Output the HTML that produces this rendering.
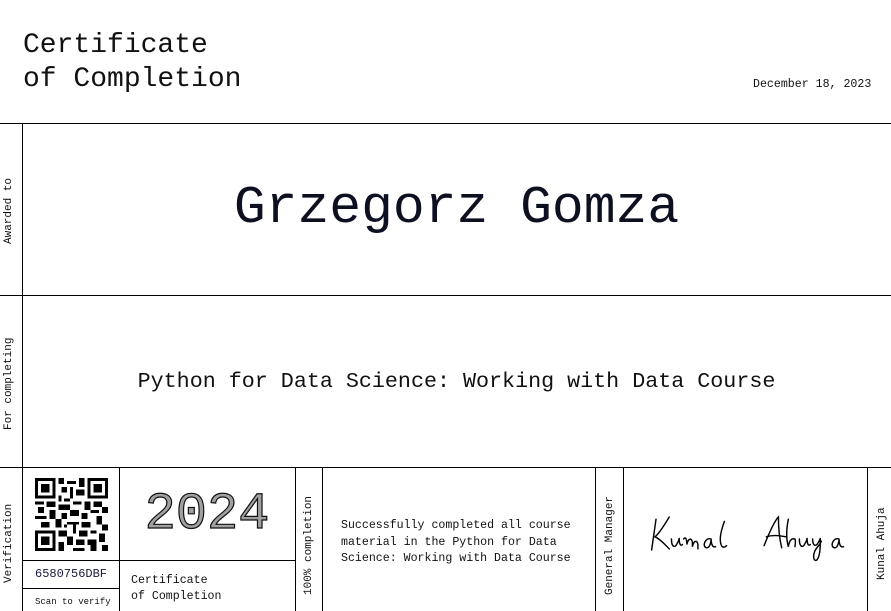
<!DOCTYPE html>
<html><head><meta charset="utf-8"><style>
body{margin:0;width:891px;height:611px;background:#fff;position:relative;overflow:hidden;font-family:"Liberation Mono",monospace;color:#111}
.a{position:absolute}
.h{position:absolute;height:1px;background:#000}
.v{position:absolute;width:1px;background:#000}
.rot{position:absolute;transform:rotate(-90deg);transform-origin:left top;white-space:nowrap;font-size:11px}
</style></head><body>
<div class="a" style="left:23px;top:29px;font-size:28px;line-height:34px">Certificate<br>of Completion</div>
<div class="a" style="left:753px;top:78px;font-size:11.6px">December 18, 2023</div>
<div class="h" style="left:0;top:123px;width:891px"></div>
<div class="h" style="left:0;top:295px;width:891px"></div>
<div class="h" style="left:0;top:467px;width:891px"></div>
<div class="v" style="left:22px;top:123px;height:488px"></div>
<div class="rot" style="left:3px;top:244px">Awarded to</div>
<div class="rot" style="left:3px;top:430px">For completing</div>
<div class="rot" style="left:3px;top:583px">Verification</div>
<div class="a" style="left:22px;width:869px;top:178px;text-align:center;font-size:53px;line-height:60px;color:#0d1020">Grzegorz Gomza</div>
<div class="a" style="left:22px;width:869px;top:369px;text-align:center;font-size:21.7px;line-height:26px">Python for Data Science: Working with Data Course</div>
<div class="v" style="left:119px;top:467px;height:144px"></div>
<div class="v" style="left:295px;top:467px;height:144px"></div>
<div class="v" style="left:322px;top:467px;height:144px"></div>
<div class="v" style="left:595px;top:467px;height:144px"></div>
<div class="v" style="left:623px;top:467px;height:144px"></div>
<div class="v" style="left:867px;top:467px;height:144px"></div>
<div class="h" style="left:22px;top:560px;width:273px"></div>
<div class="h" style="left:22px;top:588px;width:97px"></div>
<svg class="a" style="left:35px;top:478px" width="73" height="73" viewBox="0 0 25 25" shape-rendering="crispEdges">
<g fill="#000">
<path d="M0 0h7v7H0zM18 0h7v7h-7zM0 18h7v7H0z"/>
</g>
<g fill="#fff"><path d="M1 1h5v5H1zM19 1h5v5h-5zM1 19h5v5H1z"/></g>
<g fill="#000"><path d="M2 2h3v3H2zM20 2h3v3h-3zM2 20h3v3H2z"/>
<path d="M8 0h2v2H8zM11 1h3v1h-3zM15 0h2v3h-2zM9 3h2v2H9zM12 3h1v4h-1zM14 4h3v2h-3zM8 6h1v2H8zM10 7h2v1h-2zM0 8h3v1H0zM4 8h3v2H4zM1 10h2v2H1zM8 9h4v2H8zM13 8h3v1h-3zM17 8h2v3h-2zM20 8h3v2h-3zM23 10h2v2h-2zM5 11h2v3H5zM9 12h2v2H9zM12 11h3v2h-3zM16 12h2v2h-2zM19 11h3v1h-3zM0 13h4v1H0zM2 15h3v2H2zM7 14h2v3H7zM11 15h4v1h-4zM13 16h1v3h-1zM16 15h3v2h-3zM21 13h2v3h-2zM23 16h2v2h-2zM8 18h3v2H8zM11 20h2v3h-2zM15 18h3v2h-3zM19 18h2v1h-2zM22 19h2v3h-2zM8 22h2v3H8zM14 21h3v2h-3zM18 21h3v2h-3zM13 24h4v1h-4zM19 23h2v2h-2zM23 23h2v2h-2zM10 16h1v1h-1zM5 9h1v1H5z"/></g>
</svg>
<div class="a" style="left:35px;top:567px;font-size:12px;color:#1a1a3a">6580756DBF</div>
<div class="a" style="left:35px;top:597px;font-size:9px">Scan to verify</div>
<svg class="a" style="left:119px;top:475px" width="176" height="70"><text x="88" y="53" text-anchor="middle" font-family="Liberation Mono,monospace" font-size="52" fill="#a0a0a0" stroke="#111" stroke-width="1.2">2024</text></svg>
<div class="a" style="left:131px;top:573px;font-size:11.6px;line-height:16px">Certificate<br>of Completion</div>
<div class="rot" style="left:303px;top:595px">100% completion</div>
<div class="a" style="left:341px;top:518px;font-size:11.6px;line-height:16.5px">Successfully completed all course<br>material in the Python for Data<br>Science: Working with Data Course</div>
<div class="rot" style="left:604px;top:595px">General Manager</div>
<svg class="a" style="left:645px;top:506px" width="215" height="66" viewBox="0 0 195 60" preserveAspectRatio="none" fill="none" stroke="#000" stroke-width="1.3" stroke-linecap="round">
<path d="M10 12 L6 40"/>
<path d="M22 10 C16 20 12 26 9 28 C14 30 18 35 22 39"/>
<path d="M24 30 c0 6 2 8 4 6 c2-3 3-6 3-7 c0 5 1 8 3 6"/>
<path d="M35 30 c2-3 3 1 3 5 c1-5 4-7 5-2 l0 4 c1-5 4-7 5-2 l0 4"/>
<path d="M60 30 c-5-2 -9 7 -4 8 c3 0 4-6 4-8 c0 4 1 8 4 7"/>
<path d="M72 14 C68 25 67 33 70 37 c2 1 3 0 4-1"/>
<path d="M108 36 C112 26 117 14 121 10 C121 20 122 30 124 38"/>
<path d="M110 28 C116 26 122 27 128 28"/>
<path d="M130 12 C128 22 128 30 130 37 c1-6 3-8 6-7 c1 2 0 6 0 7"/>
<path d="M140 30 c0 6 2 8 4 6 c2-3 3-6 3-7 c0 5 1 8 3 6"/>
<path d="M152 30 c0 5 2 7 4 5 c2-3 3-5 3-6 c0 8 0 16 -3 20 c-3 2 -4 -3 -2 -8 c2-4 5-6 6-9"/>
<path d="M176 30 c-5-2 -9 7 -4 8 c3 0 4-6 4-8 c0 4 1 8 4 7"/>
</svg>
<div class="rot" style="left:876px;top:580px">Kunal Ahuja</div>
</body></html>
